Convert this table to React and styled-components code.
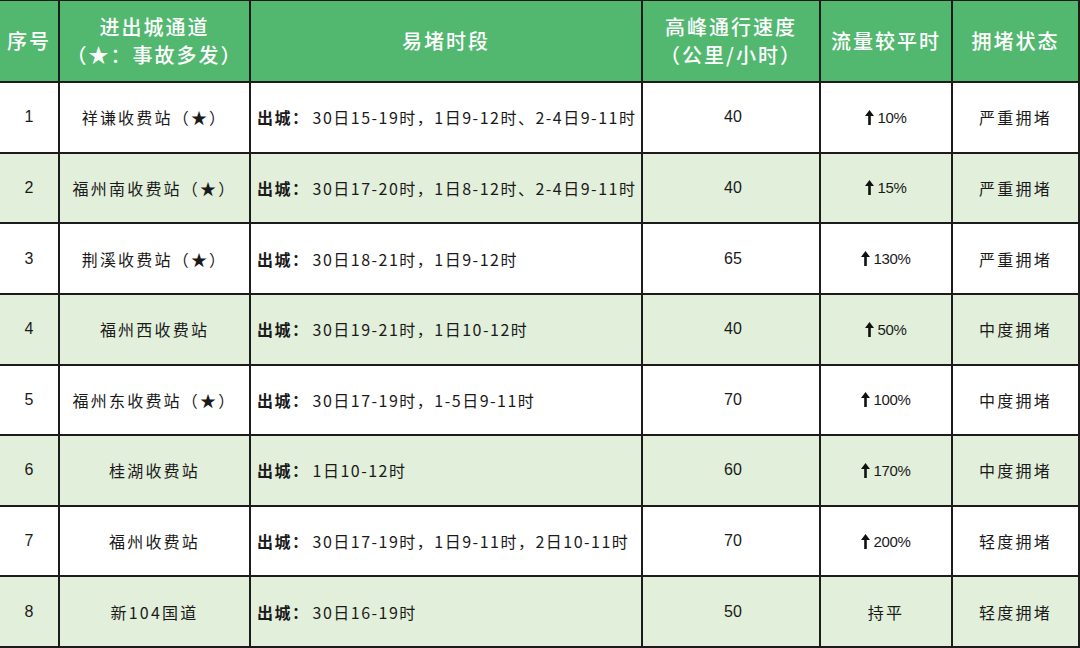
import styled, { createGlobalStyle } from "styled-components";

const GlobalStyle = createGlobalStyle`
  html, body {
    margin: 0;
    padding: 0;
    background: #fff;
  }
  body {
    font-family: "Liberation Sans", "Noto Sans CJK SC", sans-serif;
  }
`;

const rows = [
  { no: 1, name: "祥谦收费站（★）", time: "30日15-19时，1日9-12时、2-4日9-11时", speed: 40, flow: "10%", state: "严重拥堵" },
  { no: 2, name: "福州南收费站（★）", time: "30日17-20时，1日8-12时、2-4日9-11时", speed: 40, flow: "15%", state: "严重拥堵" },
  { no: 3, name: "荆溪收费站（★）", time: "30日18-21时，1日9-12时", speed: 65, flow: "130%", state: "严重拥堵" },
  { no: 4, name: "福州西收费站", time: "30日19-21时，1日10-12时", speed: 40, flow: "50%", state: "中度拥堵" },
  { no: 5, name: "福州东收费站（★）", time: "30日17-19时，1-5日9-11时", speed: 70, flow: "100%", state: "中度拥堵" },
  { no: 6, name: "桂湖收费站", time: "1日10-12时", speed: 60, flow: "170%", state: "中度拥堵" },
  { no: 7, name: "福州收费站", time: "30日17-19时，1日9-11时，2日10-11时", speed: 70, flow: "200%", state: "轻度拥堵" },
  { no: 8, name: "新104国道", time: "30日16-19时", speed: 50, flow: null, state: "轻度拥堵" },
];

const UpArrow = () => (
  <svg width="9" height="15" viewBox="0 0 9 15">
    <path d="M4.5 0 L9 6 L5.8 6 L5.8 15 L3.2 15 L3.2 6 L0 6 Z" fill="#111" />
  </svg>
);

const App = () => (
  <>
    <GlobalStyle />
    <Table>
      <Head>序号</Head>
      <Head>
        进出城通道
        <br />
        （★：事故多发）
      </Head>
      <Head>易堵时段</Head>
      <Head>
        高峰通行速度
        <br />
        （公里/小时）
      </Head>
      <Head>流量较平时</Head>
      <Head>拥堵状态</Head>
      {rows.map((r) => (
        <Row key={r.no} $shade={r.no % 2 === 0}>
          <Cell>{r.no}</Cell>
          <TextCell>{r.name}</TextCell>
          <TimeCell>
            <Bold>出城：</Bold>
            {r.time}
          </TimeCell>
          <SpeedCell>{r.speed}</SpeedCell>
          {r.flow ? (
            <Cell>
              <Flow>
                <UpArrow />
                {r.flow}
              </Flow>
            </Cell>
          ) : (
            <TextCell>持平</TextCell>
          )}
          <TextCell>{r.state}</TextCell>
        </Row>
      ))}
    </Table>
  </>
);

export default App;

const Table = styled.div`
  width: 1080px;
  height: 648px;
  box-sizing: border-box;
  display: grid;
  grid-template-columns: 58px 189px 390px 176px 130px 125px;
  grid-template-rows: 80px repeat(8, 1fr);
  gap: 2px;
  background: #1c1c1c;
  border-top: 1px solid #1c1c1c;
  border-right: 2px solid #1c1c1c;
  border-bottom: 2px solid #1c1c1c;
`;

const Head = styled.div`
  background: #52b76f;
  color: #fff;
  font-family: "Noto Sans CJK SC", sans-serif;
  font-size: 20px;
  font-weight: 500;
  line-height: 28px;
  letter-spacing: 2px;
  display: flex;
  align-items: center;
  justify-content: center;
  text-align: center;
`;

const Row = styled.div`
  display: contents;
  & > div {
    background: ${(p) => (p.$shade ? "#e2efda" : "#fff")};
  }
`;

const Cell = styled.div`
  display: flex;
  align-items: center;
  justify-content: center;
  color: #1a1a1a;
  font-size: 16px;
  white-space: nowrap;
`;

const SpeedCell = styled(Cell)`
  padding-left: 4px;
`;

const TextCell = styled(Cell)`
  font-family: "Noto Sans CJK SC", sans-serif;
  letter-spacing: 2.2px;
`;

const TimeCell = styled(Cell)`
  justify-content: flex-start;
  padding-left: 6px;
  font-family: "Noto Sans CJK SC", sans-serif;
  letter-spacing: 1.5px;
`;

const Bold = styled.span`
  font-weight: 700;
  margin-right: 3px;
`;

const Flow = styled.span`
  display: inline-flex;
  align-items: center;
  gap: 3px;
  font-family: "Liberation Sans Narrow", "Liberation Sans", sans-serif;
  font-size: 15px;
  letter-spacing: -0.3px;
`;
